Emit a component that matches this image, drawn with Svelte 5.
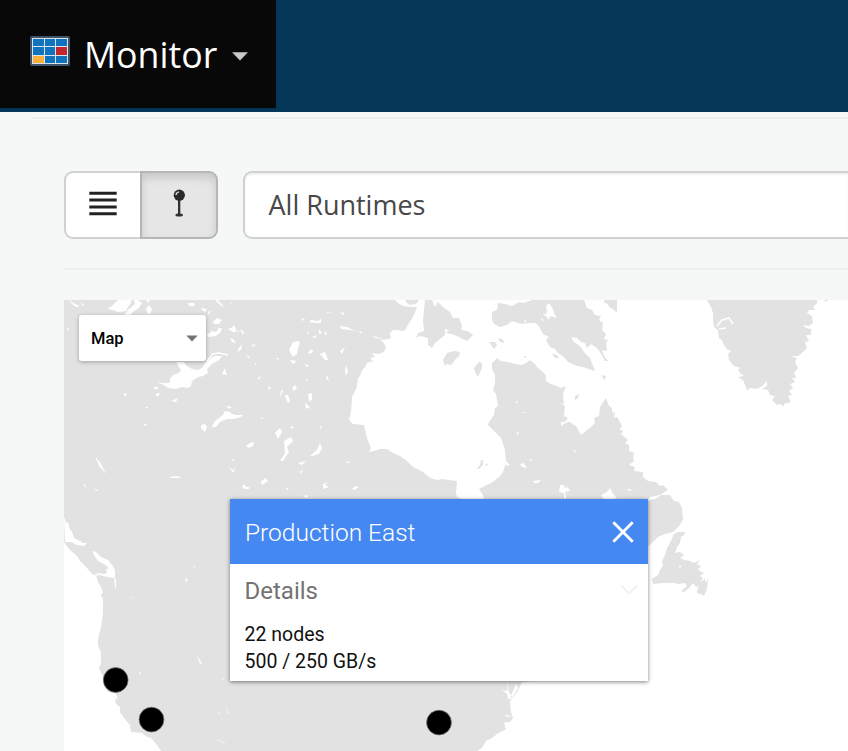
<script>
  const land = [
    // mainland
    'M64 300H395L398 303 403 306 411 307 417 307 414 315 408 325 405 330 402 331 397 330 393 330 390 333 391 338 388 339 383 340 377 337 372 336 375 338 380 339 383 342 386 347 384 352 378 354 372 353 375 357 370 358 373 361 367 363 365 367 362 370 360 376 358 378 357 387 352 397 351 412 349 420 353 424 364 425 367 438 371 448 369 452 374 451 380 449 387 449 393 453 400 456 407 461 413 467 423 472 429 477 433 479 438 480 442 479 449 480 457 481 456 493 457 497 467 501 484 500 483 495 479 489 487 485 493 482 500 476 503 472 506 463 505 450 501 438 495 432 488 425 489 422 494 415 495 408 498 406 496 394 493 390 495 383 495 375 492 369 492 363 497 358 501 361 508 362 515 364 522 365 526 363 530 360 535 364 537 367 543 372 546 376 546 381 551 384 557 386 561 388 566 386 563 394 564 404 560 403 565 406 564 416 568 418 565 422 561 422 561 426 564 424 568 422 570 422 574 425 576 426 581 435 587 430 591 427 595 423 594 418 599 416 600 407 606 398 609 406 612 408 612 412 615 413 614 418 617 417 620 422 622 427 619 429 623 431 621 434 628 440 625 443 629 445 629 451 634 453 633 458 634 461 629 465 635 467 634 471 643 472 643 477 648 481 656 482 660 486 663 485 668 490 660 495 650 497 648 500 655 499 661 495 670 495 674 501 679 502 682 508 683 520 679 526 673 532 665 534 658 537 653 542 645 549 590 570 570 650 540 680 522 682 517 692 510 702 511 712 513 718 510 722 504 723 506 729 497 734 492 738 486 741 482 748 477 751H161L157 745 151 738 147 737 142 733 131 732 130 725 124 718 120 712 120 707 116 704 115 698 113 693 108 692 103 677 99 668 101 663 101 653 98 645 98 639 101 627 103 613 103 600 101 594 103 593 101 587 98 582 96 575 92 574 87 568 80 561 77 556 70 550 66 545 64 542Z',
    // Baffin Island and its neighbours
    'M498 303 505 304 512 306 519 302 523 303 532 300H584L587 308 592 310 595 315 601 316 599 320 603 323 602 330 606 334 604 339 608 340 606 343 607 351 602 350 604 356 608 361 605 361 600 352 597 348 591 344 587 348 585 343 581 342 577 338 571 337 574 342 580 346 584 352 590 358 595 371 583 367 577 366 568 362 564 357 558 353 555 349 550 347 546 340 549 337 543 334 540 328 536 323 529 323 522 324 518 323 512 321 507 325 500 327 494 324 492 320 492 312 497 310Z',
    'M425 300H432L435 307 438 302 444 308 450 312 453 318 459 318 462 326 461 330 468 331 473 335 470 338 467 341 461 338 457 336 451 334 446 333 449 330 445 329 445 335 440 339 435 343 432 348 428 345 428 338 420 336 416 338 418 333 424 331 423 320Z',
    'M405 300H419L416 304 410 305 407 303Z',
    'M443 360 447 353 455 351 460 352 459 356 455 360 451 365 447 364 445 366Z',
    'M474 368 479 362 482 363 482 368 478 377 475 372Z',
    'M489 342 495 342 497 345 494 349 491 345Z',
    'M498 338 502 339 505 343 500 342Z',
    'M523 356 526 356 526 358Z',
    'M552 354 557 355 559 358 555 358Z',
    'M601 375 606 376 605 380 603 378Z',
    'M575 396 579 394 578 398 575 400Z',
    'M603 302 605 300H617V313L613 309 609 307 608 304Z',
    'M477 455 478 453 478 455ZM477 469 480 465 481 460 483 460 483 465 479 469ZM485 465 488 463 487 466Z',
    // Greenland
    'M707 300H817L817 303 813 307 815 310 809 310 807 313 812 316 813 323 809 326 803 325 806 328 811 329 811 335 806 335 809 341 805 342 807 348 803 352 798 356 790 356 797 358 795 362 798 368 794 373 796 378 792 378 795 382 790 384 793 388 789 391 792 395 788 396 791 402 784 404 783 407 781 404 777 405 772 400 775 396 770 395 768 390 762 389 767 386 767 381 762 386 757 389 750 388 747 391 746 387 743 380 738 377 744 376 740 373 738 369 741 368 734 366 729 360 728 354 731 351 727 349 724 345 722 340 719 338 718 330 714 327 713 321 713 313 711 307 708 302Z',
    'M824 300H828L826 302Z',
    // Newfoundland
    'M674 534 678 532 685 532 684 535 681 537 680 543 677 547 675 553 680 552 684 555 680 558 685 560 690 561 694 563 700 560 697 564 701 566 698 570 704 573 700 576 703 578 700 582 705 579 706 583 708 578 707 589 704 596 701 594 697 593 698 587 701 585 696 587 693 583 688 589 684 592 681 591 687 586 685 583 679 584 674 583 663 583 653 584 652 579 658 575 660 570 663 565 662 561 665 555 667 548 670 543Z'
  ];

  const water = [
    'M107 309 112 306 116 302 118 300H131L131 303 128 307 126 311 118 312 113 310ZM124 315 129 309 135 304 134 300H138L142 303 139 308 134 311 130 315ZM146 300H150L148 303ZM146 309 149 305 152 309 150 314H148Z',
    'M69 300 75 304 80 306 76 307 72 304ZM81 302 85 306 82 305ZM67 327 69 329 67 331Z',
    'M188 303 194 303 195 306 189 306ZM201 308 207 309 205 312 202 310ZM215 300H218L225 308 219 304ZM208 312 211 310 209 315ZM230 303 232 302 231 304ZM213 322 217 318 222 320 219 324 214 324ZM207 335 212 331 216 332 219 328 222 328 220 333 216 336 208 337ZM228 329 233 327 234 325 236 330 241 332 235 331 235 333ZM240 329 244 332 243 335ZM230 338 233 339 236 343 232 342ZM239 348 242 344 241 350 237 352ZM252 344 256 345 253 347ZM247 355 250 357 248 358ZM255 363 257 365 255 365ZM258 378 261 376 259 380ZM223 372 225 368 226 372 227 375 222 374Z',
    'M176 362 184 362 187 366 192 369 198 370 202 368 205 363 210 359 215 356 222 356 219 360 212 364 207 369 208 373 203 376 198 377 192 381 191 386 188 388 182 387 176 389 168 388 164 385 157 382 164 383 170 383 170 379 173 375 179 373 181 370Z',
    'M153 387 158 387 157 390ZM155 394 160 393 158 397ZM171 401 178 398 176 402ZM124 393 127 394 125 397ZM145 407 148 407 147 409ZM143 424 147 424 145 426Z',
    'M201 425 205 424 207 427 205 432 201 428ZM212 427 214 422 219 418 223 415 225 411 230 412 232 414 236 415 243 415 241 417 234 419 227 419 220 422 216 427ZM226 406 232 407 229 409ZM246 446 250 443 254 442 253 446 249 448ZM229 467 233 470 236 467 233 473ZM232 459 234 460 233 462ZM242 487 244 484 246 487 249 487 249 489 245 489Z',
    'M95 456 101 464 106 474 99 466ZM169 477 178 476 181 478 171 478ZM83 483 87 488 84 486ZM93 488 99 491 96 491Z',
    'M289 350 293 342 298 341 300 343 298 348 297 354 293 357ZM311 320 318 321 321 319 321 323 315 323 309 322ZM301 318 305 319 303 321ZM307 331 309 333 307 334ZM319 329 322 333 319 334ZM324 331 327 333 326 336ZM312 337 317 335 315 338ZM340 312 345 313 343 315ZM340 326 347 327 355 331 350 330 341 329ZM359 331 362 332 361 334ZM320 354 325 352 328 360 325 360ZM340 351 345 347 342 354ZM308 352 312 349 313 352 310 354ZM290 360 297 361 293 364ZM302 358 304 359ZM304 364 309 365 307 367ZM276 358 279 358 278 360Z',
    'M346 365 348 371 346 376 345 371ZM327 375 329 382 326 378ZM305 379 308 380 308 382ZM312 381 311 385ZM292 388 295 385 297 388 294 391ZM285 395 288 395 290 401 288 403 286 399ZM281 390 283 391 280 397ZM268 386 271 388 269 390ZM308 394 312 393 312 400 309 401ZM305 403 310 407 306 409ZM306 412 308 413ZM268 401 270 403ZM260 418 264 417 262 419Z',
    'M275 433 280 428 282 432 278 439ZM290 426 294 427 292 429ZM284 441 291 437 293 441 287 447 289 452 283 461 280 461 285 453ZM310 456 317 450 320 443 322 448 319 454 312 456ZM319 426 322 427 321 429ZM298 463 306 461 302 465ZM300 472 303 469 301 474ZM324 452 326 453ZM346 461 351 463 347 463ZM261 482 265 478 268 481 262 485ZM275 487 277 489ZM286 489 288 487 288 490ZM323 484 328 482 325 485 329 487 323 489ZM343 486 347 485ZM352 489 356 486 359 487 354 490ZM303 496 308 495 307 498Z',
    'M546 306 549 303 553 309 554 313 557 318 550 316 549 320 546 316 543 315 547 313ZM541 318 544 320 542 321ZM524 321 526 319 526 323ZM515 402 517 401 518 404ZM522 412 528 413 524 413ZM516 432 519 433 518 435ZM506 461 510 465 506 466ZM520 464 524 463 527 468 522 467ZM529 460 532 459 532 461ZM533 481 541 480 538 483 534 483ZM573 449 577 453 574 452Z',
    'M560 485 564 485 565 488 568 487 570 491 565 492 566 498 564 499 564 493 559 492ZM601 495 607 492 610 488 613 494 617 498 614 499 604 499ZM609 475 612 477ZM626 490 631 489 631 491ZM616 494 619 492ZM505 497 509 496Z',
    'M679 566 681 565 680 569Z',
    // Pacific and Atlantic inlets
    'M64 517 66 522 69 524 69 528 72 532 74 538 80 541 83 543 87 543 84 546 77 545 71 542 65 542Z',
    'M92 551 96 552 101 557 108 560 112 565 115 570 115 576 114 578 108 577 99 575 96 576 97 573 103 574 107 573 106 570 109 568 104 564 98 561 95 557ZM114 576 116 580 116 588 115 588Z',
    'M112 692 116 694 118 700 115 698ZM185 578 188 580 186 583ZM197 656 202 663 200 664ZM139 671 141 673 140 675Z',
    'M508 681 507 691 502 690 507 694 509 700 512 697 508 690ZM516 684 518 688 511 700 510 698ZM504 715 512 716 508 717ZM505 722 510 723 505 724Z'
  ];

  // narrow channels and river-like lakes, drawn as strokes
  const channels = [
    'M207 361 213 354 219 353 228 355',
    'M199 374 207 368',
    'M717 326 722 320 729 318 733 324M719 329 726 328'
  ];

  const faintLakes = 'M217 740 225 743M226 708 229 714M193 566 196 568M130 597 132 598M326 313 331 312M222 679 224 680M218 712 220 714';

  const pins = [
    { x: 115.7, y: 680 },
    { x: 151.5, y: 719.6 },
    { x: 439, y: 722.6 }
  ];
  const tiles = ['', '', '', '', '', 'red', 'amber', '', ''];
  const stats = ['22 nodes', '500 / 250 GB/s'];
</script>

<div class="page">
  <header>
    <button class="brand">
      <span class="logo">
        {#each tiles as tile}<i class={tile}></i>{/each}
      </span>
      <span class="name">Monitor</span>
      <svg class="caret" width="16" height="9" viewBox="0 0 16 9"><path d="M0 .3H16L8 8.6Z" fill="#c9c9c9" /></svg>
    </button>
  </header>
  <main>
    <div class="rule"></div>
    <div class="toolbar">
      <div class="toggle">
        <button aria-label="List">
          <svg width="28" height="26" viewBox="0 0 28 26"><path d="M.3 2.2H27.7M.3 9.1H27.7M.3 16H27.7M.3 22.7H27.7" stroke="#222" stroke-width="3" /></svg>
        </button>
        <button class="active" aria-label="Map">
          <svg width="14" height="30" viewBox="0 0 14 30">
            <path d="M6 10H8.3V24.6C10 24.8 11 25.3 11 26.2Q10.8 27.5 7.2 27.5Q3.4 27.5 3.4 26.2C3.4 25.3 4.4 24.8 6 24.6Z" fill="#333" />
            <circle cx="7.3" cy="6.2" r="5.6" fill="#292929" />
            <path d="M4 6Q4.3 3.4 7 2.9" fill="none" stroke="#ddd" stroke-width="1.4" />
          </svg>
        </button>
      </div>
      <div class="select">All Runtimes</div>
    </div>
    <div class="rule lower"></div>
    <section class="map">
      <svg class="canvas" width="784" height="451" viewBox="64 300 784 451">
        {#each land as d}<path {d} fill="#e2e2e2" />{/each}
        {#each water as d}<path {d} fill="#fff" />{/each}
        {#each channels as d}<path {d} fill="none" stroke="#fff" stroke-width="1.6" />{/each}
        <path d={faintLakes} fill="none" stroke="#eee" stroke-width="1.6" />
        {#each pins as pin}
          <circle cx={pin.x} cy={pin.y} r="12.4" fill="#000" stroke="#777" stroke-width=".7" />
        {/each}
      </svg>
      <div class="kind">
        <span>Map</span>
        <svg width="12" height="7" viewBox="0 0 12 7"><path d="M.3.4H11.7L6 6.5Z" fill="#737373" /></svg>
      </div>
      <article class="popup">
        <div class="title">
          <span>Production East</span>
          <svg width="22" height="22" viewBox="0 0 22 22"><path d="M1.3 1.3 20.7 20.7M20.7 1.3 1.3 20.7" stroke="#fff" stroke-width="2.8" /></svg>
        </div>
        <div class="details">
          <span>Details</span>
          <svg width="18" height="12" viewBox="0 0 18 12"><path d="M1 1.5 9 9.5 17 1.5" fill="none" stroke="#f3f3f3" stroke-width="2.4" /></svg>
        </div>
        <div class="stats">
          {#each stats as stat}<div>{stat}</div>{/each}
        </div>
      </article>
    </section>
  </main>
</div>

<style>
  .page {
    width: 848px;
    height: 751px;
    overflow: hidden;
    display: flex;
    flex-direction: column;
    background: #f6f8f8;
    font-family: 'Open Sans', 'Noto Sans', sans-serif;
  }
  button {
    margin: 0;
    padding: 0;
    border: 0;
    font: inherit;
    background: none;
  }
  header {
    height: 112px;
    flex: none;
    background: #053759;
  }
  .brand {
    width: 276px;
    height: 108px;
    display: flex;
    align-items: center;
    padding-left: 30px;
    box-sizing: border-box;
    background: #080808;
    box-shadow: 0 1px 2px rgba(0, 20, 40, .25);
  }
  .logo {
    width: 34px;
    height: 24px;
    padding: 1px;
    border: 2px solid #3f5368;
    border-radius: 2px;
    display: grid;
    grid-template-columns: repeat(3, 1fr);
    gap: 1px;
    background: #d9e5ee;
    margin-bottom: 6px;
  }
  .logo i {
    background: #1173bd;
  }
  .logo .red {
    background: #c1272d;
  }
  .logo .amber {
    background: #fbb03b;
  }
  .name {
    margin-left: 14px;
    width: 148px;
    line-height: 50px;
    font-size: 35.7px;
    color: #fff;
    text-align: left;
  }
  .caret {
    margin-top: 5px;
  }
  main {
    display: flex;
    flex-direction: column;
    padding-left: 64px;
  }
  .rule {
    height: 2px;
    margin: 5px 0 0 -32px;
    background: #eceeee;
  }
  .lower {
    margin: 29px 0 0;
  }
  .toolbar {
    display: flex;
    margin-top: 52px;
    gap: 25px;
  }
  .toggle {
    display: flex;
    width: 154px;
    height: 68px;
  }
  .toggle button {
    flex: 1;
    display: flex;
    align-items: center;
    justify-content: center;
    box-sizing: border-box;
    border: 2px solid #d0d2d2;
    border-right: 0;
    border-radius: 9px 0 0 9px;
    background: #fff;
    padding-bottom: 3px;
  }
  .toggle .active {
    border: 2px solid #b5b7b7;
    border-radius: 0 9px 9px 0;
    background: #e6e6e6;
    box-shadow: inset 0 5px 9px rgba(0, 0, 0, .13);
    padding-bottom: 3px;
  }
  .select {
    flex: 1;
    height: 68px;
    box-sizing: border-box;
    border: 2px solid #d0d2d2;
    border-right: 0;
    border-radius: 9px 0 0 9px;
    background: #fff;
    box-shadow: inset 0 2px 2px rgba(0, 0, 0, .06);
    padding-left: 23.5px;
    line-height: 64px;
    font-size: 27px;
    color: #484848;
  }
  .map {
    position: relative;
    width: 784px;
    height: 451px;
    margin-top: 30px;
    background: #fff;
    font-family: Roboto, sans-serif;
  }
  .canvas {
    display: block;
  }
  .kind {
    position: absolute;
    left: 15px;
    top: 15px;
    width: 127px;
    height: 46px;
    box-sizing: border-box;
    padding: 0 8px 0 12px;
    display: flex;
    align-items: center;
    justify-content: space-between;
    background: #fff;
    border-radius: 3px;
    box-shadow: 0 1px 4px rgba(0, 0, 0, .3);
    font-size: 16.5px;
    font-weight: 500;
    color: #000;
  }
  .kind span {
    padding-top: 1px;
  }
  .popup {
    position: absolute;
    left: 166px;
    top: 199px;
    width: 418px;
    height: 182px;
    background: #fff;
    box-shadow: 0 1px 4px rgba(0, 0, 0, .5);
  }
  .title {
    height: 65px;
    padding: 0 14px 0 15px;
    display: flex;
    align-items: center;
    justify-content: space-between;
    background: #4688f1;
    font-size: 24.5px;
    font-weight: 300;
    color: #fff;
  }
  .title span {
    padding-top: 2px;
  }
  .details {
    height: 52px;
    padding: 0 10px 0 14.5px;
    display: flex;
    align-items: center;
    justify-content: space-between;
    font-size: 24px;
    color: #737373;
  }
  .details span {
    padding-top: 1px;
  }
  .stats {
    padding: 5px 14.5px 0;
    font-size: 19.5px;
    line-height: 27px;
    color: #111;
  }
</style>
